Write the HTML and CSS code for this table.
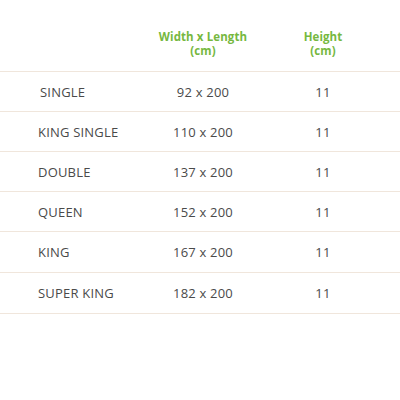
FILE: index.html
```html
<!DOCTYPE html>
<html>
<head>
<meta charset="utf-8">
<link rel="stylesheet" href="styles.css">
</head>
<body>
<div class="table">
  <div class="row head">
    <div class="cell name"></div>
    <div class="cell">Width x Length<br>(cm)</div>
    <div class="cell">Height<br>(cm)</div>
  </div>
  <div class="row r1"><div class="cell name first">SINGLE</div><div class="cell">92 x 200</div><div class="cell">11</div></div>
  <div class="row r2"><div class="cell name">KING SINGLE</div><div class="cell">110 x 200</div><div class="cell">11</div></div>
  <div class="row r3"><div class="cell name">DOUBLE</div><div class="cell">137 x 200</div><div class="cell">11</div></div>
  <div class="row r4"><div class="cell name">QUEEN</div><div class="cell">152 x 200</div><div class="cell">11</div></div>
  <div class="row r5"><div class="cell name">KING</div><div class="cell">167 x 200</div><div class="cell">11</div></div>
  <div class="row r6"><div class="cell name">SUPER KING</div><div class="cell">182 x 200</div><div class="cell">11</div></div>
</div>
</body>
</html>
```
FILE: styles.css
```css
html, body { margin: 0; padding: 0; background: #fff; }
body { font-family: "Open Sans", "Liberation Sans", sans-serif; }
.table { width: 400px; }
.row {
  display: grid;
  grid-template-columns: 145px 116px 124px;
  align-items: center;
  border-bottom: 1px solid #f0e6dc;
  height: 39px;
  color: #4a4a4a;
  font-size: 13px;
  letter-spacing: 0.2px;
}
.row.head {
  height: 72px;
  align-items: start;
  box-sizing: border-box;
  padding-top: 30px;
  color: #76b83f;
  font-weight: 700;
  font-size: 11.5px;
  line-height: 14px;
  letter-spacing: 0.1px;
}
.cell { text-align: center; }
.cell.name { text-align: left; padding-left: 38px; }
.cell.name.first { padding-left: 40px; }
.r5, .r6 { height: 40px; }
```
